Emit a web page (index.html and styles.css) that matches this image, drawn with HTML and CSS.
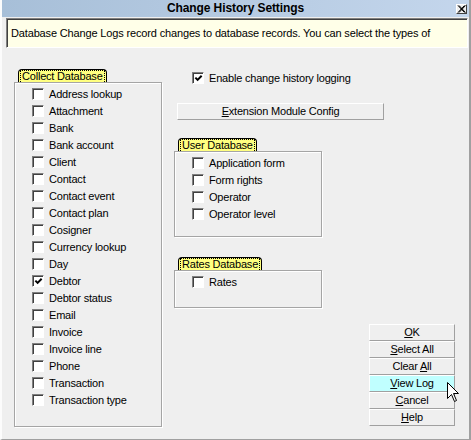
FILE: index.html
```html
<!DOCTYPE html>
<html lang="en">
<head>
  <meta charset="UTF-8" />
  <title>Change History Settings</title>
  <link rel="stylesheet" href="styles.css">
</head>
<body>

  <div class="window">
    <div class="titlebar">
      <span></span>
      <span class="title">Change History Settings</span>
      <span class="close">
        <svg width="9" height="8" viewBox="0 0 9 8"><path d="M1 0.5 L7.5 7.5 M2 0.5 L8.5 7.5 M7.5 0.5 L1 7.5 M8.5 0.5 L2 7.5" stroke="#000" stroke-width="1"/></svg>
      </span>
    </div>

    <div class="info">Database Change Logs record changes to database records. You can select the types of</div>

    <div class="main">
      <div class="group collect">
        <div class="tab"><span>Collect Database</span></div>
        <div class="box">
          <div class="item"><span class="check"></span>Address lookup</div>
          <div class="item"><span class="check"></span>Attachment</div>
          <div class="item"><span class="check"></span>Bank</div>
          <div class="item"><span class="check"></span>Bank account</div>
          <div class="item"><span class="check"></span>Client</div>
          <div class="item"><span class="check"></span>Contact</div>
          <div class="item"><span class="check"></span>Contact event</div>
          <div class="item"><span class="check"></span>Contact plan</div>
          <div class="item"><span class="check"></span>Cosigner</div>
          <div class="item"><span class="check"></span>Currency lookup</div>
          <div class="item"><span class="check"></span>Day</div>
          <div class="item"><span class="check"><svg viewBox="0 0 10 10"><path d="M1.5 4 L4 6.5 L8.5 2" fill="none" stroke="#000" stroke-width="2.2"/></svg></span>Debtor</div>
          <div class="item"><span class="check"></span>Debtor status</div>
          <div class="item"><span class="check"></span>Email</div>
          <div class="item"><span class="check"></span>Invoice</div>
          <div class="item"><span class="check"></span>Invoice line</div>
          <div class="item"><span class="check"></span>Phone</div>
          <div class="item"><span class="check"></span>Transaction</div>
          <div class="item"><span class="check"></span>Transaction type</div>
        </div>
      </div>

      <div class="side">
        <div class="item enable"><span class="check"><svg viewBox="0 0 10 10"><path d="M1.5 4 L4 6.5 L8.5 2" fill="none" stroke="#000" stroke-width="2.2"/></svg></span>Enable change history logging</div>

        <div class="btn wide"><u>E</u>xtension Module Config</div>

        <div class="group user">
          <div class="tab"><span>User Database</span></div>
          <div class="box">
            <div class="item"><span class="check"></span>Application form</div>
            <div class="item"><span class="check"></span>Form rights</div>
            <div class="item"><span class="check"></span>Operator</div>
            <div class="item"><span class="check"></span>Operator level</div>
          </div>
        </div>

        <div class="group rates">
          <div class="tab"><span>Rates Database</span></div>
          <div class="box">
            <div class="item"><span class="check"></span>Rates</div>
          </div>
        </div>

        <div class="actions">
          <div class="btn"><u>O</u>K</div>
          <div class="btn"><u>S</u>elect All</div>
          <div class="btn">Clear <u>A</u>ll</div>
          <div class="btn hot"><u>V</u>iew Log</div>
          <div class="btn"><u>C</u>ancel</div>
          <div class="btn"><u>H</u>elp</div>
        </div>
      </div>
    </div>

    <svg class="cursor" width="13" height="21" viewBox="0 0 13 21"><path d="M0.5 0.5 V16.5 L4.5 12.5 L7.5 19.5 L9.5 18.5 L6.5 11.5 H11.5 Z" fill="#fff" stroke="#000" stroke-width="1"/></svg>
  </div>

</body>
</html>
```

FILE: styles.css
```css
* {
  margin: 0;
  padding: 0;
  box-sizing: border-box;
}

body {
  font-family: 'Liberation Sans', Arial, sans-serif;
  font-size: 11px;
  letter-spacing: -0.2px;
  color: #000;
  background: #efefef;
}

.window {
  position: relative;
  width: 471px;
  height: 440px;
  background: #efefef;
  border-style: solid;
  border-width: 0 2px 1px 2px;
  border-color: #fff #a0a0a0 #a0a0a0 #fcfcfc;
}

.titlebar {
  height: 17px;
  display: grid;
  grid-template-columns: 1fr auto 1fr;
  align-items: center;
  background: linear-gradient(to right, #a7bfd8, #c4d6ec);
}

.title {
  font-weight: bold;
  font-size: 12px;
  letter-spacing: -0.1px;
  line-height: 17px;
}

.close {
  justify-self: end;
  margin-right: 2px;
  width: 11px;
  height: 10px;
  display: flex;
  align-items: center;
  justify-content: center;
  background: #efefef;
  border: 1px solid;
  border-color: #fff #404040 #404040 #fff;
}

.close svg {
  display: block;
}

.info {
  margin: 1px 1px 0 4px;
  height: 30px;
  padding-left: 4px;
  line-height: 28px;
  letter-spacing: -0.15px;
  background: #ffffe8;
  border: 1px solid;
  border-color: #808080 #fff #fff #808080;
  box-shadow: inset 1px 1px 0 #404040;
  white-space: nowrap;
  overflow: hidden;
}

.main {
  display: flex;
  margin: 21px 0 0 12px;
}

.group {
  display: flex;
  flex-direction: column;
  align-items: flex-start;
}

.group .tab {
  height: 13px;
  margin-left: 4px;
  padding: 0 1px;
  background: #ffff80;
  border: 1px solid #000;
  border-bottom: none;
  border-radius: 4px 4px 0 0;
}

.group .tab span {
  display: block;
  height: 12px;
  line-height: 10px;
  padding: 0 1px;
  border: 1px dotted #000;
  border-bottom: none;
}

.group .box {
  width: 148px;
  padding: 2px 0 0 17px;
  border: 1px solid #a5a5a5;
  box-shadow: 1px 1px 0 #fff, inset 1px 1px 0 #fff;
}

.collect .box {
  height: 345px;
}

.item {
  display: flex;
  align-items: center;
  height: 17px;
  white-space: nowrap;
}

.check {
  width: 12px;
  height: 12px;
  margin-right: 5px;
  flex-shrink: 0;
  background: #fff;
  border: 1px solid;
  border-color: #808080 #fff #fff #808080;
  box-shadow: inset 1px 1px 0 #404040;
  padding: 1px 0 0 1px;
}

.check svg {
  display: block;
  width: 9px;
  height: 9px;
}

.side {
  margin-left: 12px;
  flex: 1;
  display: flex;
  flex-direction: column;
}

.enable {
  padding-left: 18px;
}

.btn {
  height: 17px;
  line-height: 15px;
  text-align: center;
  background: #efefef;
  border: 1px solid;
  border-color: #fff #a0a0a0 #a0a0a0 #fff;
}

.btn.wide {
  width: 207px;
  margin: 17px 0 0 3px;
}

.user {
  margin-top: 18px;
}

.user .box {
  height: 86px;
}

.rates {
  margin-top: 20px;
}

.rates .box {
  height: 38px;
}

.actions {
  margin: auto 0 1px 195px;
  width: 86px;
}

.btn.hot {
  background: #c0ffff;
}

.cursor {
  position: absolute;
  left: 445px;
  top: 382px;
}
```
